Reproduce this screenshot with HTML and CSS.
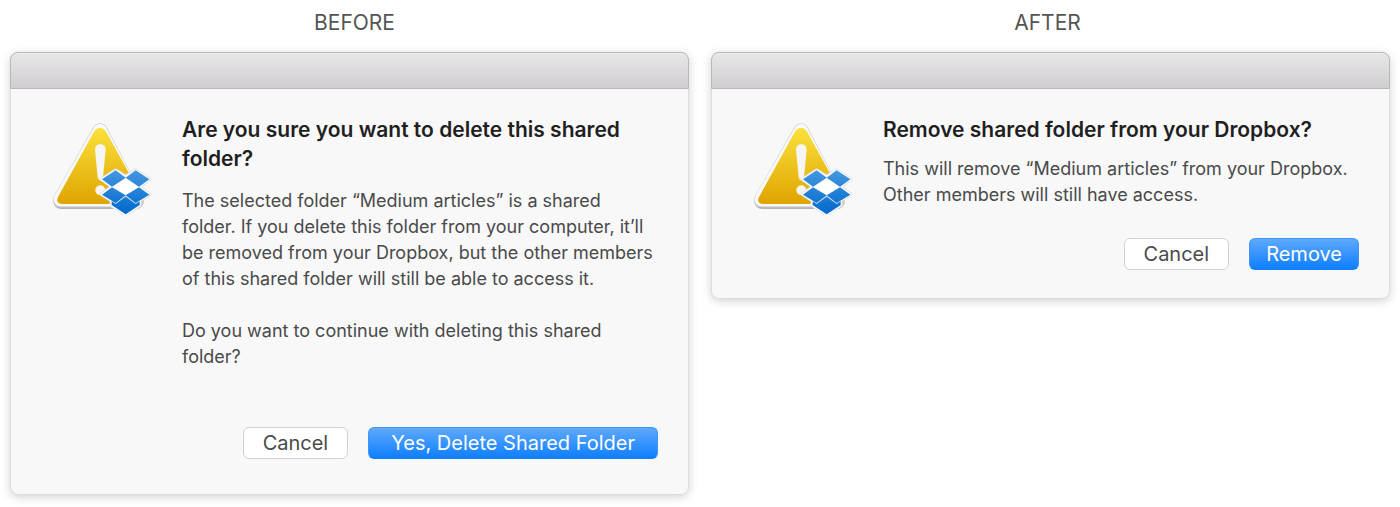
FILE: index.html
```html
<!DOCTYPE html>
<html lang="en">
<head>
<meta charset="utf-8">
<meta name="viewport" content="width=device-width, initial-scale=1">
<title>Before and after</title>
<link rel="stylesheet" href="styles.css">
</head>
<body>
<svg width="0" height="0" class="defs" aria-hidden="true">
  <defs>
    <linearGradient id="yellow" x1="0" y1="0" x2="0" y2="1">
      <stop offset="0" stop-color="#fbe13c"/>
      <stop offset="1" stop-color="#dfa400"/>
    </linearGradient>
    <linearGradient id="blue" gradientUnits="userSpaceOnUse" x1="0" y1="166" x2="0" y2="298">
      <stop offset="0" stop-color="#4498e0"/>
      <stop offset="1" stop-color="#0068cc"/>
    </linearGradient>
    <symbol id="warning" viewBox="36 24 300 276">
      <path d="M180 49 L288 259 H63 Z" fill="#b4b4b4" stroke="#b4b4b4" stroke-width="46" stroke-linejoin="round"/>
      <path d="M180 48 L288 254 H62 Z" fill="#f6f6f6" stroke="#d4d4d4" stroke-width="46" stroke-linejoin="round"/>
      <path d="M180 48 L288 253 H62 Z" fill="#f9f9f9" stroke="#f9f9f9" stroke-width="42" stroke-linejoin="round"/>
      <path d="M163 48 Q180 28 197 48 L306 245 Q314 266 292 267 H68 Q45 266 54 246 Z" fill="url(#yellow)"/>
      <path d="M165 105 Q165 88 181 88 Q197 88 197 105 L189 187 Q187 196 181 196 Q175 196 173 187 Z" fill="#f5f5f3"/>
      <circle cx="181" cy="226" r="15" fill="#f5f5f3"/>
      <path d="M227 166 L257 185 L287 166 L328 193 L297 215 L328 238 L299 256 V271 L257 299 L214 271 V256 L185 238 L216 215 L185 193 Z" fill="#f8f8f8" stroke="#d9dee3" stroke-width="11" stroke-linejoin="round"/>
      <path d="M227 166 L257 185 L287 166 L328 193 L297 215 L328 238 L299 256 V271 L257 299 L214 271 V256 L185 238 L216 215 L185 193 Z" fill="#cfe3f5" stroke="#f8f8f8" stroke-width="7" stroke-linejoin="round"/>
      <path d="M227 166 L257 188 L216 215 L186 193 Z M287 166 L328 193 L297 215 L257 188 Z M216 217 L257 241 L227 264 L186 239 Z M297 217 L328 239 L287 264 L257 241 Z M215 259 L227 267 L257 245 L287 267 L299 259 V270 L257 298 L215 270 Z" fill="url(#blue)"/>
      <path d="M257 190 L296 216 L257 240 L217 216 Z" fill="#fff"/>
    </symbol>
  </defs>
</svg>
<main class="comparison">
  <section class="column">
    <h1 class="label label-before">BEFORE</h1>
    <div class="dialog dialog-long">
      <div class="titlebar"></div>
      <div class="content">
        <svg class="icon" role="img" aria-label="Dropbox warning"><use href="#warning"/></svg>
        <div class="message">
          <h2 class="title">Are you sure you want to delete this shared folder?</h2>
          <p class="text">The selected folder “Medium articles” is a shared folder. If you delete this folder from your computer, it’ll be removed from your Dropbox, but the other members of this shared folder will still be able to access it.</p>
          <p class="text">Do you want to continue with deleting this shared folder?</p>
        </div>
      </div>
      <div class="actions">
        <button type="button" class="button">Cancel</button>
        <button type="button" class="button primary wide">Yes, Delete Shared Folder</button>
      </div>
    </div>
  </section>
  <section class="column">
    <h1 class="label label-after">AFTER</h1>
    <div class="dialog">
      <div class="titlebar"></div>
      <div class="content">
        <svg class="icon" role="img" aria-label="Dropbox warning"><use href="#warning"/></svg>
        <div class="message">
          <h2 class="title">Remove shared folder from your Dropbox?</h2>
          <p class="text">This will remove “Medium articles” from your Dropbox. Other members will still have access.</p>
        </div>
      </div>
      <div class="actions">
        <button type="button" class="button">Cancel</button>
        <button type="button" class="button primary">Remove</button>
      </div>
    </div>
  </section>
</main>
</body>
</html>
```
FILE: styles.css
```css
* { box-sizing: border-box; }

body {
  margin: 0;
  background: #fff;
  font-family: Inter, "Liberation Sans", sans-serif;
  color: #4a4a4a;
}

.defs { display: block; }

.comparison {
  display: grid;
  grid-template-columns: 1fr 1fr;
  align-items: start;
  gap: 22px;
  padding: 10px 10px 12px;
}

.label {
  margin: 0 0 16px;
  font-size: 21px;
  line-height: 26px;
  font-weight: 400;
  text-align: center;
  color: #555;
}

.label-before { padding-left: 10px; }
.label-after { padding-right: 6px; }

.dialog {
  border-radius: 8px;
  background: #f8f8f8;
  box-shadow: inset 0 0 0 1px #dcdcdc, 0 2px 10px rgba(0, 0, 0, 0.18);
  padding-bottom: 29px;
}

.dialog-long { padding-bottom: 36px; }

.titlebar {
  height: 37px;
  border: 1px solid #b9b8b9;
  border-radius: 8px 8px 0 0;
  background: linear-gradient(#e8e7e8, #d0ced0);
  box-shadow: inset 0 1px #efefef;
}

.content {
  display: flex;
  align-items: flex-start;
  gap: 30px;
  padding: 26px 31px 0 42px;
}

.icon {
  flex: none;
  width: 100px;
  height: 92px;
  margin-top: 8px;
}

.message { max-width: 475px; }

.title {
  margin: 0 0 12px;
  font-size: 21px;
  line-height: 29px;
  font-weight: 600;
  color: #1f1f1f;
}

.text {
  margin: 0;
  font-size: 18px;
  line-height: 26px;
  font-weight: 400;
}

.dialog-long .title { margin-bottom: 15px; }
.text + .text { margin-top: 26px; }

.actions {
  display: flex;
  justify-content: flex-end;
  gap: 20px;
  padding: 23px 31px 0;
}

.dialog-long .actions { padding-top: 57px; }

.button {
  height: 32px;
  padding: 0 19px;
  border: 1px solid #d2d2d2;
  border-radius: 6px;
  background: #fff;
  font-family: inherit;
  font-size: 20px;
  line-height: 30px;
  color: #4a4a4a;
}

.primary {
  padding: 0 16px;
  border-color: #3d96fb;
  border-bottom-color: #1482ff;
  background: linear-gradient(#5ea9fb, #0f7fff);
  color: #fff;
}

.wide { padding: 0 22px; }
```
